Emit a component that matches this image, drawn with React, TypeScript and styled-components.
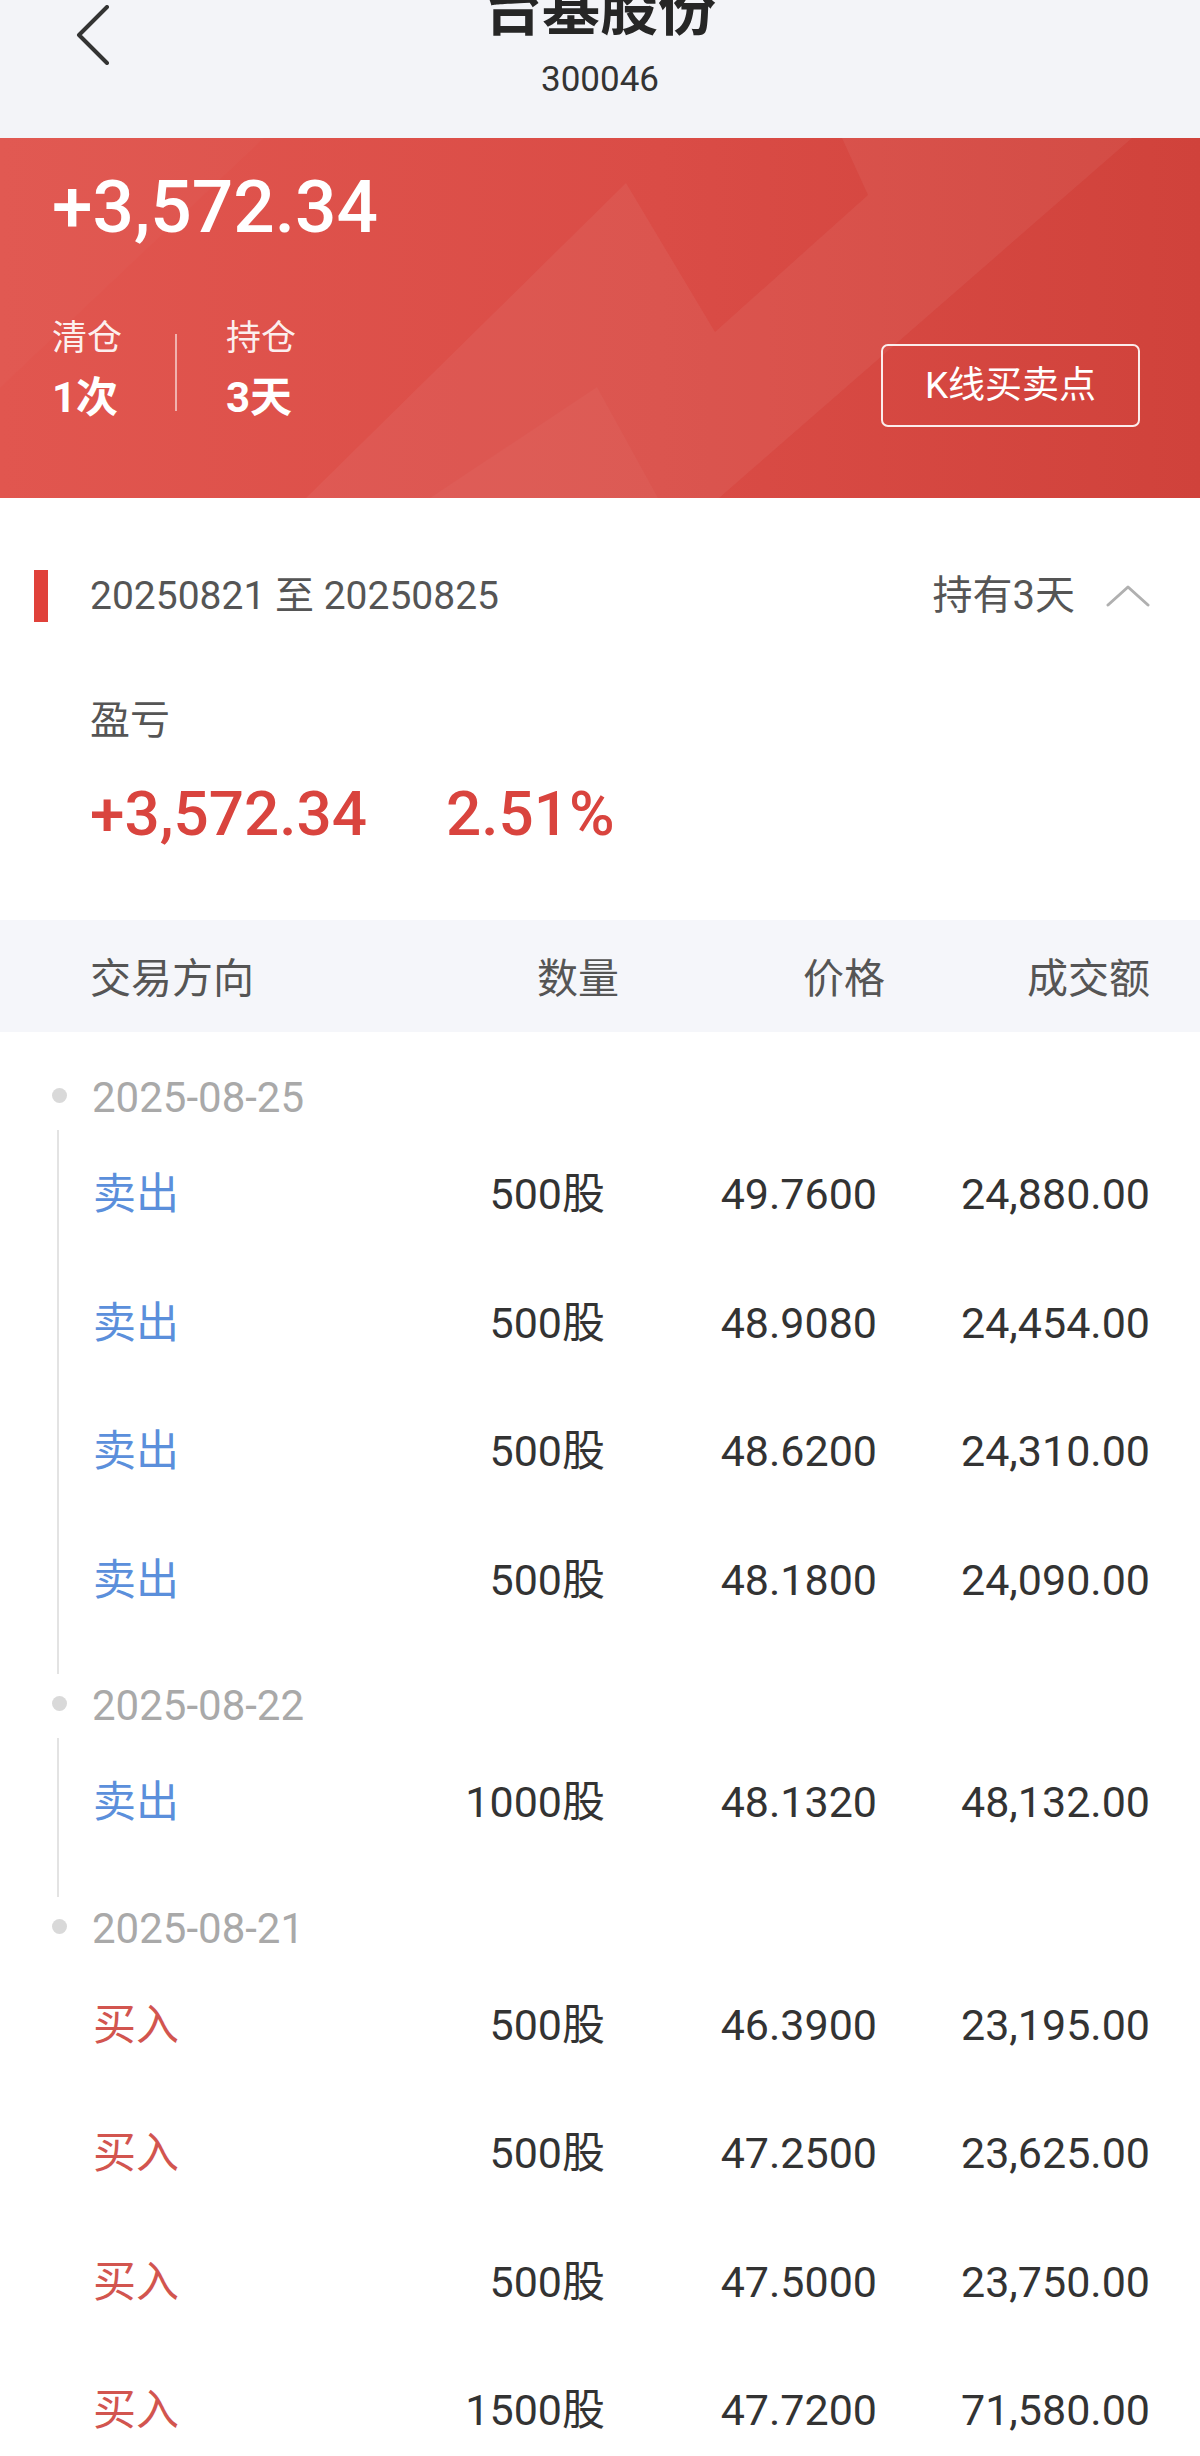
import React from 'react';
import styled, { createGlobalStyle } from 'styled-components';

const GlobalStyle = createGlobalStyle`
  html, body {
    margin: 0;
    padding: 0;
    background: #ffffff;
  }
  body {
    font-family: Roboto, "Noto Sans CJK SC", sans-serif;
    -webkit-font-smoothing: antialiased;
  }
`;

const Page = styled.div`
  width: 1200px;
  height: 2456px;
  overflow: hidden;
  background: #ffffff;
`;

/* ---------- top bar ---------- */

const Header = styled.header`
  height: 138px;
  background: #f3f4f8;
  display: grid;
  grid-template-columns: 1fr auto 1fr;
  align-items: start;
  overflow: hidden;
`;

const BackButton = styled.button`
  justify-self: start;
  display: flex;
  width: 36px;
  height: 60px;
  margin: 5px 0 0 75px;
  padding: 0;
  border: 0;
  background: none;
  cursor: pointer;
`;

const TitleBlock = styled.div`
  display: flex;
  flex-direction: column;
  align-items: center;
`;

const Title = styled.h1`
  margin: -19px 0 0;
  font-size: 58px;
  line-height: 58px;
  font-weight: 700;
  color: #262626;
`;

const Code = styled.div`
  margin-top: 21px;
  font-size: 35px;
  line-height: 40px;
  color: #333333;
`;

/* ---------- red summary banner ---------- */

const Banner = styled.section`
  position: relative;
  height: 360px;
  box-sizing: border-box;
  padding: 29px 60px 0 52px;
  overflow: hidden;
  color: #ffffff;
  background: linear-gradient(90deg, #e1564f 0%, #da4c46 55%, #d0423b 100%);
`;

const BannerArt = styled.svg`
  position: absolute;
  inset: 0;
  width: 100%;
  height: 100%;
  pointer-events: none;
`;

const BannerBody = styled.div`
  position: relative;
`;

const BigProfit = styled.div`
  font-size: 73px;
  line-height: 80px;
  font-weight: 500;
`;

const BannerRow = styled.div`
  margin-top: 70px;
  display: flex;
  align-items: flex-end;
`;

const Stats = styled.div`
  display: flex;
  align-items: center;
`;

const Stat = styled.div`
  display: flex;
  flex-direction: column;
`;

const StatLabel = styled.span`
  font-size: 35px;
  line-height: 44px;
  color: rgba(255, 255, 255, 0.92);
`;

const StatValue = styled.span`
  margin-top: 8px;
  font-size: 42px;
  line-height: 58px;
  font-weight: 700;
`;

const StatDivider = styled.div`
  width: 2px;
  height: 77px;
  margin: 0 49px 0 53px;
  background: rgba(255, 255, 255, 0.55);
`;

const KlineButton = styled.button`
  margin-left: auto;
  width: 259px;
  height: 83px;
  box-sizing: border-box;
  padding-top: 2px;
  border: 2px solid rgba(255, 255, 255, 0.9);
  border-radius: 7px;
  background: transparent;
  color: #ffffff;
  font-family: inherit;
  font-size: 37px;
  line-height: 44px;
  cursor: pointer;
`;

/* ---------- holding period ---------- */

const RangeRow = styled.div`
  margin-top: 68px;
  height: 60px;
  padding: 0 50px 0 34px;
  display: flex;
  align-items: center;
`;

const RangeMark = styled.span`
  width: 14px;
  height: 52px;
  margin-right: 42px;
  background: #e0413a;
`;

const RangeText = styled.span`
  font-size: 39px;
  line-height: 60px;
  color: #555555;
`;

const HoldToggle = styled.div`
  margin-left: auto;
  display: flex;
  align-items: center;
  gap: 31px;
  font-size: 40px;
  line-height: 60px;
  color: #555555;
`;

const Pnl = styled.div`
  margin-top: 70px;
  padding-left: 90px;
`;

const PnlLabel = styled.div`
  font-size: 40px;
  line-height: 50px;
  color: #555555;
`;

const PnlValues = styled.div`
  margin-top: 33px;
  display: flex;
  gap: 79px;
  font-size: 62px;
  line-height: 70px;
  font-weight: 500;
  color: #d9443e;
`;

/* ---------- trade table ---------- */

const Columns = styled.div<{ $template: string }>`
  display: grid;
  grid-template-columns: ${({ $template }) => $template};
  align-items: center;
`;

const TableHead = styled(Columns)`
  margin-top: 71px;
  height: 112px;
  box-sizing: border-box;
  padding: 6px 50px 0 90px;
  background: #f5f6fa;
  font-size: 41px;
  line-height: 50px;
  color: #555555;
`;

const HeadCell = styled.span<{ $right?: boolean }>`
  text-align: ${({ $right }) => ($right ? 'right' : 'left')};
`;

const Timeline = styled.div`
  padding-top: 34px;
`;

const DateRow = styled.div`
  height: 64px;
  padding-left: 52px;
  display: flex;
  align-items: center;
`;

const Dot = styled.span`
  width: 15px;
  height: 15px;
  margin: -5px 25px 0 0;
  border-radius: 50%;
  background: #d9d9d9;
`;

const DateText = styled.span`
  font-size: 42px;
  line-height: 50px;
  color: #a9a9a9;
`;

const GroupBody = styled.div<{ $line: boolean }>`
  margin-left: 57px;
  padding: 0 50px 30px 34px;
  border-left: 2px solid ${({ $line }) => ($line ? '#e3e3e3' : 'transparent')};
`;

const TradeRow = styled(Columns)`
  height: 128.5px;
  font-size: 43px;
  line-height: 50px;
  color: #333333;
`;

const Direction = styled.span<{ $side: 'buy' | 'sell' }>`
  color: ${({ $side }) => ($side === 'sell' ? '#5b8fdb' : '#d2554f')};
`;

const Num = styled.span`
  text-align: right;
`;

type Trade = { side: 'buy' | 'sell'; qty: string; price: string; amount: string };
type Group = { date: string; trades: Trade[] };

const groups: Group[] = [
  {
    date: '2025-08-25',
    trades: [
      { side: 'sell', qty: '500股', price: '49.7600', amount: '24,880.00' },
      { side: 'sell', qty: '500股', price: '48.9080', amount: '24,454.00' },
      { side: 'sell', qty: '500股', price: '48.6200', amount: '24,310.00' },
      { side: 'sell', qty: '500股', price: '48.1800', amount: '24,090.00' },
    ],
  },
  {
    date: '2025-08-22',
    trades: [{ side: 'sell', qty: '1000股', price: '48.1320', amount: '48,132.00' }],
  },
  {
    date: '2025-08-21',
    trades: [
      { side: 'buy', qty: '500股', price: '46.3900', amount: '23,195.00' },
      { side: 'buy', qty: '500股', price: '47.2500', amount: '23,625.00' },
      { side: 'buy', qty: '500股', price: '47.5000', amount: '23,750.00' },
      { side: 'buy', qty: '1500股', price: '47.7200', amount: '71,580.00' },
    ],
  },
];

const ROW_COLS = '1fr 270px 272px 273px';
const HEAD_COLS = '1fr 284px 266px 265px';

const App: React.FC = () => {
  return (
    <Page>
      <GlobalStyle />
      <Header>
        <BackButton aria-label="返回">
          <svg width="36" height="60" viewBox="0 0 36 60">
            <polyline
              points="32,2 4,30 32,58"
              fill="none"
              stroke="#333"
              strokeWidth="4"
              strokeLinecap="round"
              strokeLinejoin="round"
            />
          </svg>
        </BackButton>
        <TitleBlock>
          <Title>台基股份</Title>
          <Code>300046</Code>
        </TitleBlock>
      </Header>

      <Banner>
        <BannerArt viewBox="0 0 1200 360" preserveAspectRatio="none">
          <polygon
            points="306,360 626,45 715,194 868,57 842,0 1132,0 719,360"
            fill="#ffffff"
            fillOpacity="0.05"
          />
          <polygon points="430,360 597,249 658,360" fill="#ffffff" fillOpacity="0.03" />
          <polygon points="0,0 264,0 0,250" fill="#ffffff" fillOpacity="0.02" />
        </BannerArt>
        <BannerBody>
          <BigProfit>+3,572.34</BigProfit>
          <BannerRow>
            <Stats>
              <Stat>
                <StatLabel>清仓</StatLabel>
                <StatValue>1次</StatValue>
              </Stat>
              <StatDivider />
              <Stat>
                <StatLabel>持仓</StatLabel>
                <StatValue>3天</StatValue>
              </Stat>
            </Stats>
            <KlineButton>K线买卖点</KlineButton>
          </BannerRow>
        </BannerBody>
      </Banner>

      <RangeRow>
        <RangeMark />
        <RangeText>20250821 至 20250825</RangeText>
        <HoldToggle>
          持有3天
          <svg width="44" height="22" viewBox="0 0 44 22">
            <polyline
              points="2,20 22,2 42,20"
              fill="none"
              stroke="#b0b0b0"
              strokeWidth="3"
              strokeLinecap="round"
              strokeLinejoin="round"
            />
          </svg>
        </HoldToggle>
      </RangeRow>

      <Pnl>
        <PnlLabel>盈亏</PnlLabel>
        <PnlValues>
          <span>+3,572.34</span>
          <span>2.51%</span>
        </PnlValues>
      </Pnl>

      <TableHead $template={HEAD_COLS}>
        <HeadCell>交易方向</HeadCell>
        <HeadCell $right>数量</HeadCell>
        <HeadCell $right>价格</HeadCell>
        <HeadCell $right>成交额</HeadCell>
      </TableHead>

      <Timeline>
        {groups.map((g, gi) => (
          <div key={g.date}>
            <DateRow>
              <Dot />
              <DateText>{g.date}</DateText>
            </DateRow>
            <GroupBody $line={gi < groups.length - 1}>
              {g.trades.map((t, i) => (
                <TradeRow key={i} $template={ROW_COLS}>
                  <Direction $side={t.side}>{t.side === 'sell' ? '卖出' : '买入'}</Direction>
                  <Num>{t.qty}</Num>
                  <Num>{t.price}</Num>
                  <Num>{t.amount}</Num>
                </TradeRow>
              ))}
            </GroupBody>
          </div>
        ))}
      </Timeline>
    </Page>
  );
};

export default App;
